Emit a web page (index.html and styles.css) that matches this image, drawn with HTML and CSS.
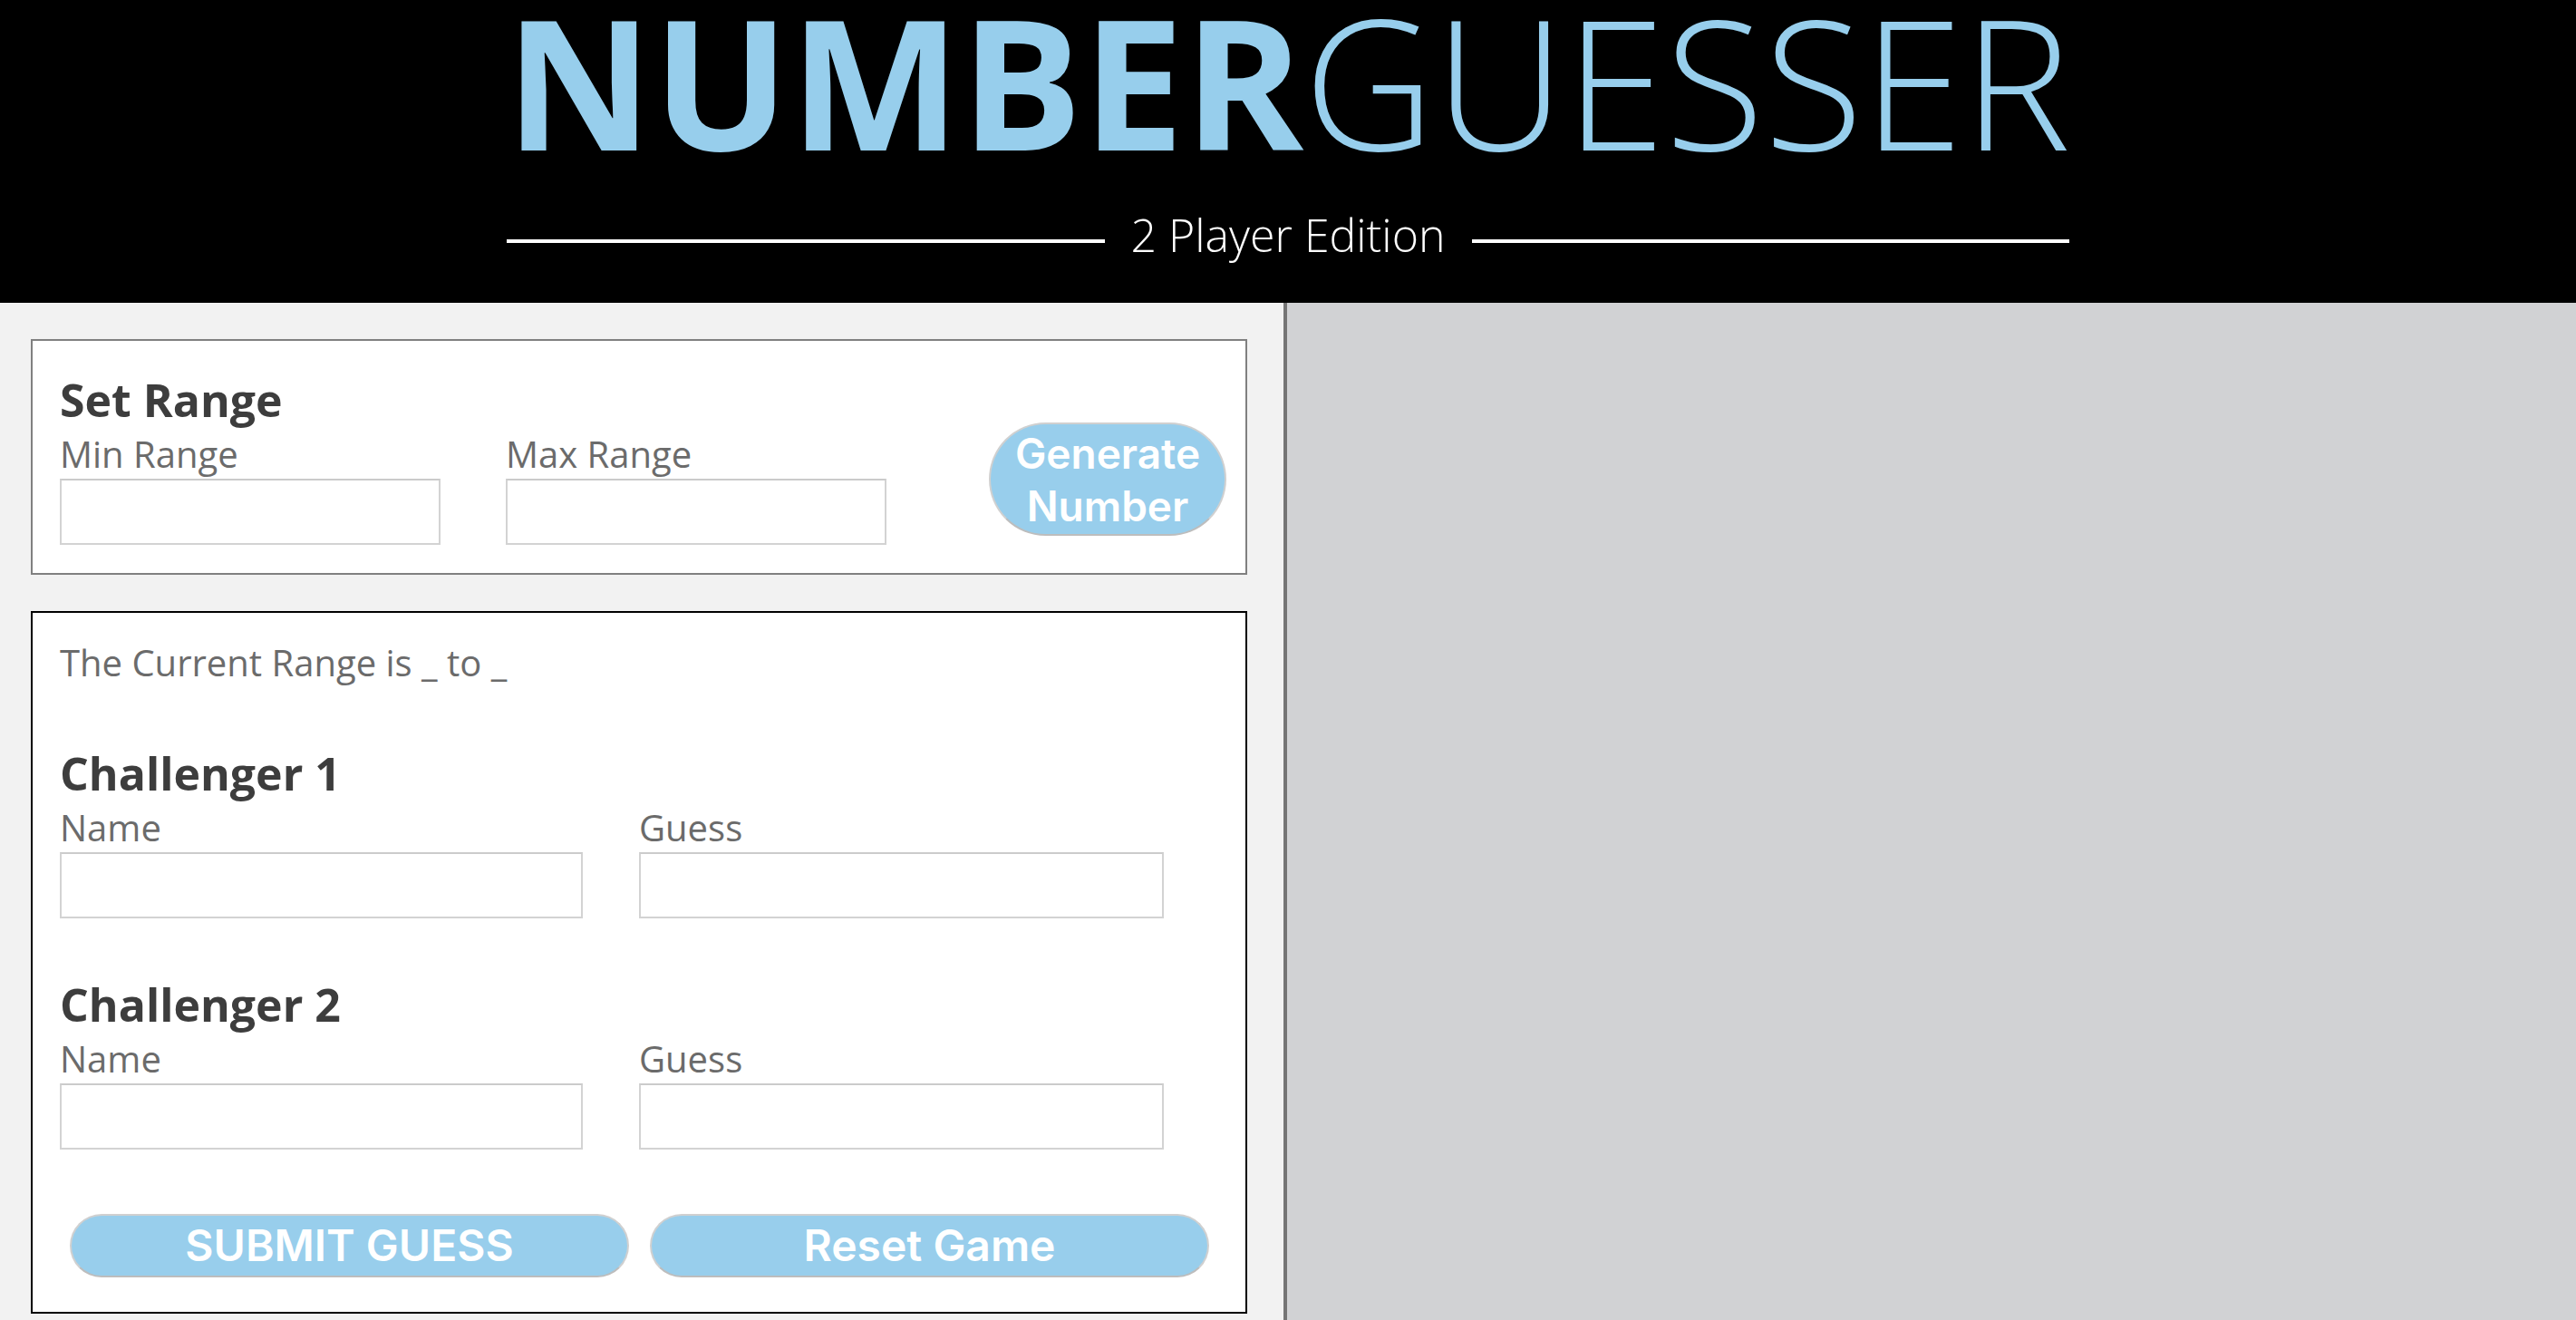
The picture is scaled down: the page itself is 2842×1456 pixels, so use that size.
FILE: index.html
```html
<!DOCTYPE html>
<html lang="en">
<head>
<meta charset="utf-8">
<title>Number Guesser</title>
<link rel="stylesheet" href="styles.css">
</head>
<body>
<header class="site-header">
  <h1 class="title"><span class="title-bold">NUMBER</span><span class="title-light">GUESSER</span></h1>
  <div class="subtitle-row">
    <span class="rule"></span>
    <span class="subtitle">2 Player Edition</span>
    <span class="rule"></span>
  </div>
</header>
<main class="layout">
  <section class="left-panel">
    <div class="card card-range">
      <h2 class="card-heading">Set Range</h2>
      <div class="range-row">
        <label class="field field-range">
          <span class="field-label">Min Range</span>
          <input class="field-input" type="text">
        </label>
        <label class="field field-range field-max">
          <span class="field-label">Max Range</span>
          <input class="field-input" type="text">
        </label>
        <button class="btn btn-generate">Generate Number</button>
      </div>
    </div>
    <div class="card card-game">
      <p class="current-range">The Current Range is _ to _</p>
      <div class="challenger">
        <h2 class="card-heading">Challenger 1</h2>
        <div class="challenger-row">
          <label class="field field-name">
            <span class="field-label">Name</span>
            <input class="field-input" type="text">
          </label>
          <label class="field field-guess">
            <span class="field-label">Guess</span>
            <input class="field-input" type="text">
          </label>
        </div>
      </div>
      <div class="challenger challenger-second">
        <h2 class="card-heading">Challenger 2</h2>
        <div class="challenger-row">
          <label class="field field-name">
            <span class="field-label">Name</span>
            <input class="field-input" type="text">
          </label>
          <label class="field field-guess">
            <span class="field-label">Guess</span>
            <input class="field-input" type="text">
          </label>
        </div>
      </div>
      <div class="action-row">
        <button class="btn btn-action">SUBMIT GUESS</button>
        <button class="btn btn-action">Reset Game</button>
      </div>
    </div>
  </section>
  <section class="right-panel"></section>
</main>
</body>
</html>
```

FILE: styles.css
```css
* {
  box-sizing: border-box;
}

html, body {
  margin: 0;
  padding: 0;
}

body {
  font-family: "Open Sans", "Noto Sans", sans-serif;
  background: #f2f2f2;
  min-height: 100vh;
  overflow: hidden;
}

.site-header {
  background: #000;
  height: 334px;
  display: flex;
  flex-direction: column;
  align-items: center;
}

.title {
  margin: 0;
  font-size: 200px;
  line-height: 178px;
  color: #97ceec;
  letter-spacing: 0;
  white-space: nowrap;
}

.title-bold {
  font-weight: 700;
}

.title-light {
  font-weight: 300;
}

.subtitle-row {
  margin-top: 47px;
  width: 1724px;
  display: flex;
  align-items: center;
  gap: 29px;
}

.rule {
  flex: 1;
  height: 4px;
  background: #fff;
  margin-top: 14px;
}

.subtitle {
  font-size: 50px;
  font-weight: 300;
  color: #fff;
  line-height: 68px;
  white-space: nowrap;
}

.layout {
  display: flex;
  height: calc(100vh - 334px);
}

.left-panel {
  width: 1420px;
  flex: none;
  background: #f2f2f2;
  border-right: 4px solid #757575;
  padding: 40px 40px 0 34px;
  display: flex;
  flex-direction: column;
  gap: 40px;
}

.right-panel {
  flex: 1;
  background: #d1d2d4;
}

.card {
  background: #fff;
  width: 1342px;
}

.card-range {
  border: 2px solid #808080;
  height: 260px;
  padding: 32px 21px 0 30px;
}

.card-game {
  border: 2px solid #000;
  padding: 28px 30px 38px 30px;
}

.card-heading {
  margin: 0;
  font-size: 50px;
  font-weight: 700;
  line-height: 66px;
  color: #3d3d3d;
}

.range-row {
  display: flex;
  align-items: flex-start;
}

.field {
  display: flex;
  flex-direction: column;
}

.field-label {
  font-size: 40px;
  line-height: 54px;
  color: #6b6b6b;
}

.field-input {
  height: 73px;
  border: 2px solid #d3d3d3;
  border-top-color: #cbcbcb;
  background: #fff;
  margin: 0;
  padding: 0;
  outline: none;
  font: inherit;
}

.field-range {
  width: 420px;
}

.field-max {
  margin-left: 72px;
}

.btn {
  font-family: "Inter", "Liberation Sans", sans-serif;
  font-weight: 600;
  color: #fff;
  background: #98ceec;
  border: 2px solid #d0d0d0;
  border-bottom-color: #bdbdbd;
  border-radius: 999px;
  cursor: pointer;
  padding: 0;
}

.btn-generate {
  margin-left: auto;
  margin-top: -8px;
  width: 262px;
  height: 125px;
  font-size: 46px;
  line-height: 58px;
  padding: 0 10px;
}

.current-range {
  margin: 0;
  font-size: 40px;
  line-height: 54px;
  color: #6b6b6b;
}

.challenger {
  margin-top: 62px;
}

.challenger-row {
  display: flex;
  gap: 62px;
}

.field-name {
  width: 577px;
}

.field-guess {
  width: 579px;
}

.action-row {
  margin-top: 71px;
  display: flex;
  gap: 23px;
  padding-left: 11px;
}

.btn-action {
  width: 617px;
  height: 70px;
  font-size: 48px;
  line-height: 1;
}
```
